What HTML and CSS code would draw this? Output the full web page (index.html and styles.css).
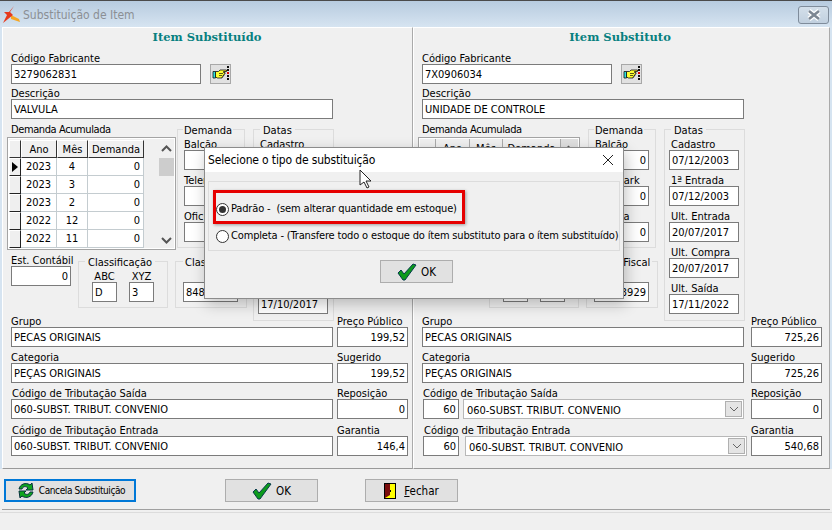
FILE: index.html
```html
<!DOCTYPE html>
<html lang="pt">
<head>
<meta charset="utf-8">
<title>Substituição de Item</title>
<link rel="stylesheet" href="styles.css">
</head>
<body>
<svg class="defs" width="0" height="0" aria-hidden="true">
  <defs>
    <symbol id="hand" viewBox="0 0 21 20">
      <path d="M5.500 7.500h3l1.500-1.500h6.500v1.500h-3v1h1.500v1.500h-1v1.500h-1v1.500h-1v1H7.500l-2-1z" fill="#ffff30" stroke="#111" stroke-width=".8"/>
      <path d="M3 7.500h2.500v6.500H3z" fill="#30e0e0" stroke="#111" stroke-width=".8"/>
      <path d="M9 9.500h4M9 11.500h3" stroke="#111" stroke-width=".7"/>
      <rect x="17" y="2" width="2" height="2" fill="#111"/>
      <rect x="17" y="5" width="2" height="2" fill="#111"/>
      <rect x="17" y="8" width="2" height="2" fill="#e00000"/>
      <rect x="17" y="11" width="2" height="2" fill="#111"/>
      <rect x="17" y="14" width="2" height="2" fill="#111"/>
    </symbol>
    <symbol id="check" viewBox="0 0 20 18">
      <path d="M1 10l3-3 3 4 9-10 3 1-11 15H6z" fill="#0c9a1c" stroke="#063a4c" stroke-width="1" stroke-linejoin="round"/>
    </symbol>
  </defs>
</svg>
<div class="window">
  <header class="titlebar">
    <svg class="logo" viewBox="0 0 18 18" width="18" height="18"><path d="M9 9l8 4 1 3-9-3z" fill="#f5a623"/><path d="M12 0L8 6l3 3-10 8 4-8-3-3h5z" fill="#e63a1c"/></svg>
    <span class="wintitle">Substituição de Item</span>
    <span class="winclose"><svg viewBox="0 0 16 12" width="16" height="12"><path d="M3 2l10 8M13 2L3 10" stroke="#fff" stroke-width="5"/><path d="M3 2l10 8M13 2L3 10" stroke="#7d8792" stroke-width="2.600"/></svg></span>
  </header>

  <main class="panels">
    <section class="panel panel-left">
      <h2 class="heading">Item Substituído</h2>
      <div class="code-row">
        <div class="field"><label class="lbl">Código Fabricante</label><div class="inp w190">3279062831</div></div>
        <button class="lookup"><svg width="21" height="20"><use href="#hand"/></svg></button>
      </div>
      <div class="field desc"><label class="lbl">Descrição</label><div class="inp w322">VALVULA</div></div>

      <div class="mid">
        <div class="mid-left">
          <div class="mid-top">
            <div class="demand">
              <div class="lbl ind4 tight">Demanda Acumulada</div>
              <div class="gridbox">
                <div class="grid">
                  <div class="hc"></div><div class="hc">Ano</div><div class="hc">Mês</div><div class="hc">Demanda</div>
                  <div class="ic cur"><i></i></div><div class="c">2023</div><div class="c">4</div><div class="c r">0</div>
                  <div class="ic"></div><div class="c">2023</div><div class="c">3</div><div class="c r">0</div>
                  <div class="ic"></div><div class="c">2023</div><div class="c">2</div><div class="c r">0</div>
                  <div class="ic"></div><div class="c">2022</div><div class="c">12</div><div class="c r">0</div>
                  <div class="ic"></div><div class="c">2022</div><div class="c">11</div><div class="c r">0</div>
                </div>
                <div class="scroll">
                  <svg class="arr" viewBox="0 0 15 14" width="15" height="14"><path d="M3 9l4.500-4.500 4.500 4.500" fill="none" stroke="#555" stroke-width="2"/></svg>
                  <div class="thumb"></div>
                  <svg class="arr arr-down" viewBox="0 0 15 14" width="15" height="14"><path d="M3 5l4.500 4.500 4.500-4.500" fill="none" stroke="#555" stroke-width="2"/></svg>
                </div>
              </div>
            </div>
            <div class="group g-demanda">
              <span class="legend">Demanda</span>
              <label class="lbl">Balcão</label><div class="inp w54 num"></div>
              <label class="lbl gap2">Telemark</label><div class="inp w54 num"></div>
              <label class="lbl gap2">Oficina</label><div class="inp w54 num"></div>
            </div>
          </div>
          <div class="mid-bottom">
            <div class="field est"><label class="lbl">Est. Contábil</label><div class="inp w60 num">0</div></div>
            <div class="group g-class">
              <span class="legend">Classificação</span>
              <div class="abc">
                <div class="field"><label class="lbl ctr">ABC</label><div class="inp w25">D</div></div>
                <div class="field"><label class="lbl ctr">XYZ</label><div class="inp w25">3</div></div>
              </div>
            </div>
            <div class="group g-fiscal">
              <span class="legend">Clas. Fiscal</span>
              <div class="fiscal-inp"><div class="inp w55">848</div></div>
            </div>
          </div>
        </div>
        <div class="group g-datas">
          <span class="legend">Datas</span>
          <label class="lbl">Cadastro</label><div class="inp w70"></div>
          <label class="lbl gap2"></label><div class="inp w70"></div>
          <label class="lbl gap2"></label><div class="inp w70"></div>
          <label class="lbl gap2"></label><div class="inp w70"></div>
          <label class="lbl gap2"></label><div class="inp w70">17/10/2017</div>
        </div>
      </div>

      <div class="pair"><div class="field"><label class="lbl">Grupo</label><div class="inp w322">PECAS ORIGINAIS</div></div><div class="field price"><label class="lbl">Preço Público</label><div class="inp w71 num">199,52</div></div></div>
      <div class="pair"><div class="field"><label class="lbl">Categoria</label><div class="inp w322">PEÇAS ORIGINAIS</div></div><div class="field price"><label class="lbl">Sugerido</label><div class="inp w71 num">199,52</div></div></div>
      <div class="pair"><div class="field"><label class="lbl ind1">Código de Tributação Saída</label><div class="inp w322">060-SUBST. TRIBUT. CONVENIO</div></div><div class="field price"><label class="lbl">Reposição</label><div class="inp w71 num">0</div></div></div>
      <div class="pair last"><div class="field"><label class="lbl ind1">Código de Tributação Entrada</label><div class="inp w322">060-SUBST. TRIBUT. CONVENIO</div></div><div class="field price"><label class="lbl">Garantia</label><div class="inp w71 num">146,4</div></div></div>
    </section>

    <section class="panel panel-right">
      <h2 class="heading">Item Substituto</h2>
      <div class="code-row">
        <div class="field"><label class="lbl">Código Fabricante</label><div class="inp w190">7X0906034</div></div>
        <button class="lookup"><svg width="21" height="20"><use href="#hand"/></svg></button>
      </div>
      <div class="field desc"><label class="lbl">Descrição</label><div class="inp w322">UNIDADE DE CONTROLE</div></div>

      <div class="mid">
        <div class="mid-left">
          <div class="mid-top">
            <div class="demand">
              <div class="lbl ind4 tight">Demanda Acumulada</div>
              <div class="gridbox gridbox-flat">
                <div class="grid grid-flat">
                  <div class="hc"></div><div class="hc">Ano</div><div class="hc">Mês</div><div class="hc">Demanda</div>
                </div>
                <div class="scroll scroll-flat">
                  <svg class="arr" viewBox="0 0 15 14" width="15" height="14"><path d="M3 9l4.500-4.500 4.500 4.500z" fill="#555"/></svg>
                </div>
              </div>
            </div>
            <div class="group g-demanda">
              <span class="legend">Demanda</span>
              <label class="lbl">Balcão</label><div class="inp w54 num">0</div>
              <label class="lbl gap2">Telemark</label><div class="inp w54 num">0</div>
              <label class="lbl gap2">Oficina</label><div class="inp w54 num">0</div>
            </div>
          </div>
          <div class="mid-bottom">
            <div class="field est"><label class="lbl"></label><div class="inp w60 num"></div></div>
            <div class="group g-class">
              <span class="legend blank"></span>
              <div class="abc">
                <div class="field"><label class="lbl ctr"></label><div class="inp w25"></div></div>
                <div class="field"><label class="lbl ctr"></label><div class="inp w25"></div></div>
              </div>
            </div>
            <div class="group g-fiscal">
              <span class="legend">Clas. Fiscal</span>
              <div class="fiscal-inp"><div class="inp w55 num">3929</div></div>
            </div>
          </div>
        </div>
        <div class="group g-datas">
          <span class="legend">Datas</span>
          <label class="lbl">Cadastro</label><div class="inp w70">07/12/2003</div>
          <label class="lbl gap2">1ª Entrada</label><div class="inp w70">07/12/2003</div>
          <label class="lbl gap2">Ult. Entrada</label><div class="inp w70">20/07/2017</div>
          <label class="lbl gap2">Ult. Compra</label><div class="inp w70">20/07/2017</div>
          <label class="lbl gap2">Ult. Saída</label><div class="inp w70">17/11/2022</div>
        </div>
      </div>

      <div class="pair"><div class="field"><label class="lbl">Grupo</label><div class="inp w322">PECAS ORIGINAIS</div></div><div class="field price"><label class="lbl">Preço Público</label><div class="inp w71 num">725,26</div></div></div>
      <div class="pair"><div class="field"><label class="lbl">Categoria</label><div class="inp w322">PEÇAS ORIGINAIS</div></div><div class="field price"><label class="lbl">Sugerido</label><div class="inp w71 num">725,26</div></div></div>
      <div class="pair"><div class="field"><label class="lbl ind1">Código de Tributação Saída</label>
        <div class="combo-row"><div class="inp w36 num">60</div><div class="combo c-said"><span>060-SUBST. TRIBUT. CONVENIO</span><b class="drop"><svg viewBox="0 0 10 6" width="10" height="6"><path d="M1 1l4 4 4-4" fill="none" stroke="#666"/></svg></b></div></div>
      </div><div class="field price"><label class="lbl">Reposição</label><div class="inp w71 num">0</div></div></div>
      <div class="pair last"><div class="field"><label class="lbl ind2">Código de Tributação Entrada</label>
        <div class="combo-row"><div class="inp w36 num">60</div><div class="combo c-entr"><span>060-SUBST. TRIBUT. CONVENIO</span><b class="drop"><svg viewBox="0 0 10 6" width="10" height="6"><path d="M1 1l4 4 4-4" fill="none" stroke="#666"/></svg></b></div></div>
      </div><div class="field price"><label class="lbl">Garantia</label><div class="inp w71 num">540,68</div></div></div>
    </section>
  </main>

  <footer class="actions">
    <button class="btn btn-cancel">
      <svg viewBox="0 0 18 17" width="18" height="17"><path d="M2 7C3 2 9 0 13 3l2-2 1 7h-7l2-2C9 4 6 4 5 7z" fill="#0fa51e" stroke="#06303e"/><path d="M16 10c-1 5-7 7-11 4l-2 2-1-7h7l-2 2c2 2 5 2 6-1z" fill="#0fa51e" stroke="#06303e"/></svg>
      <span class="cancel-text">Cancela Substituição</span>
    </button>
    <button class="btn btn-ok"><svg width="20" height="18"><use href="#check"/></svg>OK</button>
    <button class="btn btn-close">
      <svg viewBox="0 0 12 16" width="12" height="16"><rect x=".5" y=".5" width="11" height="15" fill="#ffff00" stroke="#000"/><path d="M1 1h5v11l-5 3z" fill="#7a0c0c"/><rect x="6" y="7" width="1" height="2" fill="#000"/></svg>
      <span><u>F</u>echar</span>
    </button>
  </footer>
  <div class="statusbar"></div>
</div>

<div class="modal" role="dialog">
  <div class="modal-title">
    <span>Selecione o tipo de substituição</span>
    <svg viewBox="0 0 12 12" width="12" height="12"><path d="M1 1l10 10M11 1L1 11" stroke="#222" stroke-width="1"/></svg>
  </div>
  <div class="modal-body">
    <div class="options">
      <div class="highlight"><div class="radio-row"><span class="radio on"></span><span>Padrão -&nbsp; (sem alterar quantidade em estoque)</span></div></div>
      <div class="radio-row second"><span class="radio"></span><span>Completa - (Transfere todo o estoque do ítem substituto para o ítem substituído)</span></div>
    </div>
    <button class="btn modal-ok"><svg width="20" height="18"><use href="#check"/></svg>OK</button>
  </div>
</div>

<svg class="cursor" viewBox="0 0 14 20" width="14" height="20"><path d="M1 1v15l4-3 3 6 2-1-3-6h5z" fill="#fff" stroke="#222" stroke-width="1"/></svg>
</body>
</html>
```

FILE: styles.css
```css
* { box-sizing: border-box; }
html, body { margin: 0; padding: 0; }
body {
  width: 832px; height: 530px; overflow: hidden; position: relative;
  background: #f0f0f0; color: #000;
  font: 11px/14px "DejaVu Sans Condensed", "DejaVu Sans", sans-serif;
}
.defs { position: absolute; }
.window { width: 832px; height: 530px; display: flex; flex-direction: column; background: #f0f0f0; }

.titlebar {
  height: 27px; flex: none; display: flex; align-items: center; padding: 2px 3px 0 2px;
  border-top: 1px solid #4a4a4a;
  background: linear-gradient(#b7cbdf, #d6e4f1);
}
.logo { flex: none; }
.wintitle { margin-left: 3px; color: #8b8f94; font-size: 12px; }
.winclose {
  margin-left: auto; margin-top: -1px; width: 31px; height: 18px; border: 1px solid #7f8c9b; border-radius: 3px;
  display: flex; align-items: center; justify-content: center;
  background: linear-gradient(#d3dfea, #c1d0df);
}

.panels { display: flex; height: 442px; flex: none; padding-left: 2px; background: #d6e4f1; }
.panel { background: #f0f0f0; border-top: 1px solid #fff; border-left: 1px solid #fff; border-bottom: 1px solid #999; padding-left: 4px; }
.panel-left { width: 411px; border-right: 1px solid #aaa; }
.panel-right { width: 417px; border-right: 1px solid #aaa; }

.heading {
  margin: 0; height: 18px; text-align: center; color: #078080;
  font: bold 11.500px/19px "DejaVu Serif", serif;
}
.panel-left .heading { width: 400px; }
.panel-right .heading { width: 404px; }

.code-row { display: flex; margin: 4px 0 0 4px; align-items: flex-end; }
.field { display: flex; flex-direction: column; }
.desc { margin: 1px 0 0 4px; }
.lbl { display: block; height: 14px; line-height: 17px; white-space: nowrap; }
.tight { letter-spacing: -.4px; }
.ind1 { padding-left: 1px; }
.ind2 { padding-left: 2px; }
.ind4 { padding-left: 4px; }
.ctr { text-align: center; }
.gap2 { margin-top: 2px; }

.inp {
  height: 20px; line-height: 19px; background: #fff; border: 1px solid #7b7b7b; padding: 0 2px;
  white-space: nowrap; overflow: hidden;
}
.num { text-align: right; }
.w190 { width: 190px; }
.w322 { width: 322px; }
.w54 { width: 54px; }
.w60 { width: 60px; }
.w25 { width: 25px; }
.w55 { width: 55px; }
.w70 { width: 70px; }
.w71 { width: 71px; }
.w36 { width: 36px; }

.lookup {
  margin-left: 9px; width: 21px; height: 20px; padding: 0; border: 1px solid #a8a8a8; background: #e1e1e1; display: block;
}
.lookup svg { display: block; margin: -1px; }

.mid { display: flex; height: 190px; margin-top: 2px; }
.mid-left { width: 246px; flex: none; }
.mid-top { display: flex; height: 131px; }
.demand { width: 170px; flex: none; }
.gridbox {
  margin-top: 2px; width: 169px; height: 113px; border: 1px solid #a4a4a4; outline: 1px solid #fff; outline-offset: -2px;
  padding: 2px 2px 2px 1px; display: flex; background: #f0f0f0;
}
.grid { width: 135px; display: grid; grid-template-columns: 12px 36px 31px 56px; grid-auto-rows: 18px; }
.hc { background: #f0f0f0; border-right: 1px solid #333; border-bottom: 1px solid #333; border-left: 1px solid #fff; border-top: 1px solid #fff; text-align: center; line-height: 17px; }
.c { background: #fff; border-right: 1px solid #c4ccd0; border-bottom: 1px solid #c4ccd0; text-align: center; line-height: 18px; }
.c.r { text-align: right; padding-right: 3px; }
.ic { background: #efefef; border-right: 1px solid #222; border-bottom: 1px solid #222; border-left: 1px solid #fff; border-top: 1px solid #fff; position: relative; }
.cur i { position: absolute; left: 2px; top: 3px; border-left: 6px solid #000; border-top: 5px solid transparent; border-bottom: 5px solid transparent; }
.scroll { width: 15px; margin-left: 15px; display: flex; flex-direction: column; }
.arr { display: block; flex: none; margin-top: 2px; }
.thumb { margin-top: 2px; height: 18px; background: #cdcdcd; }
.arr-down { margin-top: auto; }
.gridbox-flat { width: 162px; margin-left: 0; background: #f0f0f0; padding: 1px; }
.grid-flat { width: 141px; grid-template-columns: 16px 34px 33px 58px; }
.grid-flat .hc { border: 0; border-right: 1px solid #aaa; background: #f0f0f0; line-height: 20px; }
.scroll-flat { margin-left: 0; width: 17px; background: #e0e0e0; }

.group { border: 1px solid #dcdcdc; }
.legend { display: block; width: fit-content; height: 13px; line-height: 15px; margin: -7px 0 0 5px; padding: 0 3px; background: #f0f0f0; white-space: nowrap; }
.legend.blank { width: 60px; }
.g-demanda { width: 68px; height: 119px; margin-top: 8px; padding-left: 6px; }
.g-demanda .legend { margin-left: -1px; padding: 0 1px; }
.g-datas { width: 81px; height: 192px; margin: 8px 0 -10px 0; padding-left: 4px; flex: none; }
.g-datas .legend { margin-left: 2px; }
.g-datas .lbl { padding-left: 2px; }

.mid-bottom { display: flex; }
.est { margin-left: 4px; width: 60px; }
.g-class { width: 90px; height: 47px; margin: 9px 0 0 7px; padding-left: 13px; }
.g-class .legend { margin-left: -7px; }
.abc { display: flex; gap: 12px; }
.g-fiscal { width: 72px; height: 47px; margin: 9px 0 0 7px; padding-left: 7px; }
.g-fiscal .legend { margin-left: 0; padding: 0 2px; }
.fiscal-inp { margin-top: 14px; }

.pair { display: flex; margin: 2px 0 0 4px; gap: 4px; }
.panel-right .pair { gap: 7px; }
.pair.last { margin-top: 3px; }
.combo-row { display: flex; gap: 4px; padding-left: 1px; width: 322px; }
.combo {
  height: 20px; background: #fff; border: 1px solid #b8b8b8; display: flex; align-items: center; padding-left: 3px;
}
.c-said { width: 282px; }
.c-entr { width: 282px; margin-left: 2px; margin-right: -3px; flex: none; }
.combo span { flex: 1; white-space: nowrap; padding-top: 3px; }
.drop { width: 17px; height: 16px; background: #e4e4e4; border: 1px solid #b0b0b0; margin-right: 1px; display: flex; align-items: center; justify-content: center; }

.actions { height: 41px; flex: none; padding: 10px 0 0 2px; display: flex; align-items: flex-start; border-bottom: 1px solid #a0a0a0; margin: 0 2px; }
.btn {
  height: 23px; padding: 0; background: #e1e1e1; border: 1px solid #adadad; color: #000;
  font: 11.500px "DejaVu Sans Condensed", "DejaVu Sans", sans-serif;
  display: flex; align-items: center; justify-content: center; gap: 4px;
}
.btn-cancel { width: 132px; border: 2px solid #0078d7; gap: 4px; padding-left: 2px; }
.cancel-text { font-size: 10px; letter-spacing: -.4px; }
.btn-ok { width: 93px; margin-left: 89px; }
.btn-close { width: 93px; margin-left: 47px; gap: 8px; }
.statusbar { margin-top: 2px; flex: 1; border-top: 1px solid #dcdcdc; }

.modal {
  position: absolute; left: 204px; top: 147px; width: 420px; height: 152px;
  background: #f0f0f0; border: 1px solid #8c8c8c;
  box-shadow: 2px 5px 14px rgba(0,0,0,.24);
}
.modal-title { height: 24px; background: #fff; display: flex; align-items: center; justify-content: space-between; padding: 0 9px 0 3px; font-size: 12px; letter-spacing: -.15px; }
.modal-body { padding: 9px 3px 0; letter-spacing: -.16px; }
.options { height: 70px; border: 1px solid #dcdcdc; padding: 8px 0 0 4px; }
.highlight { width: 252px; height: 34px; border: 3px solid #e60000; display: flex; align-items: center; padding-top: 4px; box-shadow: 1px 1px 3px rgba(0,0,0,.35); }
.radio-row { display: flex; align-items: center; gap: 2px; white-space: nowrap; height: 20px; }
.second { margin: 2px 0 0 3px; }
.radio { width: 13px; height: 13px; border-radius: 50%; border: 1px solid #333; background: #fff; flex: none; position: relative; }
.radio.on::after { content: ""; position: absolute; inset: 2px; border-radius: 50%; background: #333; }
.modal-ok { width: 73px; margin: 9px 0 0 172px; }
.cursor { position: absolute; left: 359px; top: 169px; }
```
